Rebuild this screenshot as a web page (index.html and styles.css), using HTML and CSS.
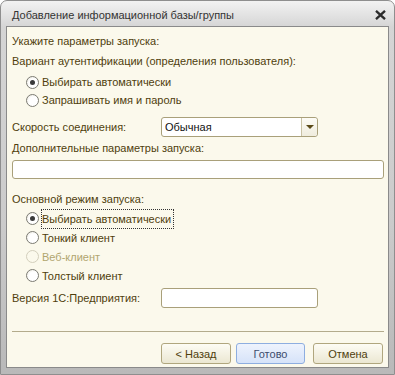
FILE: index.html
```html
<!DOCTYPE html>
<html lang="ru">
  <head>
    <meta charset="UTF-8" />
    <title>Добавление информационной базы/группы</title>
    <link rel="stylesheet" href="styles.css">
  </head>
  <body>
    <div class="window">
      <div class="titlebar">
        <span class="title">Добавление информационной базы/группы</span>
        <svg class="close" width="11" height="10" viewBox="0 0 11 10">
          <path d="M1 0.8 L10 9.2 M10 0.8 L1 9.2" stroke="#2b2b2b" stroke-width="2.3" />
        </svg>
      </div>
      <div class="content">
        <div class="line">Укажите параметры запуска:</div>
        <div class="line gap-s">Вариант аутентификации (определения пользователя):</div>
        <div class="radios auth">
          <label class="radio checked"><span class="dot"></span>Выбирать автоматически</label>
          <label class="radio"><span class="dot"></span>Запрашивать имя и пароль</label>
        </div>

        <div class="field-row speed">
          <span class="field-label">Скорость соединения:</span>
          <div class="combo">
            <span class="combo-value">Обычная</span>
            <span class="combo-btn"><span class="arrow"></span></span>
          </div>
        </div>

        <div class="line gap-s">Дополнительные параметры запуска:</div>
        <div class="input wide"></div>

        <div class="line mode-label">Основной режим запуска:</div>
        <div class="radios mode">
          <label class="radio checked"><span class="dot"></span><span class="focus">Выбирать автоматически</span></label>
          <label class="radio"><span class="dot"></span>Тонкий клиент</label>
          <label class="radio disabled"><span class="dot"></span>Веб-клиент</label>
          <label class="radio"><span class="dot"></span>Толстый клиент</label>
        </div>

        <div class="field-row version">
          <span class="field-label">Версия 1С:Предприятия:</span>
          <div class="input short"></div>
        </div>

        <div class="separator"></div>

        <div class="buttons">
          <button type="button">&lt; Назад</button>
          <button type="button" class="default">Готово</button>
          <button type="button" class="cancel">Отмена</button>
        </div>
      </div>
    </div>
  </body>
</html>
```

FILE: styles.css
```css
body {
  margin: 0;
  padding: 0;
  background-color: #ffffff;
  font-family: "Liberation Sans", Arial, sans-serif;
  font-size: 11px;
  color: #4f3e0c;
}

.window {
  width: 395px;
  height: 375px;
  box-sizing: border-box;
  padding: 0 5px 6px 5px;
  border: 1px solid #8e8e8e;
  border-radius: 7px 7px 0 0;
  background: linear-gradient(#f2f2f2, #d5d5d5 26px, #cbcbcb 60%, #b9b9b9);
  display: flex;
  flex-direction: column;
}

.titlebar {
  height: 25px;
  box-sizing: border-box;
  flex: none;
  display: flex;
  align-items: center;
  justify-content: space-between;
  padding: 3px 3px 0 6px;
}

.title {
  font-size: 11px;
  color: #333333;
}

.content {
  flex: 1;
  border: 1px solid #8a8a8a;
  background-color: #fbf9ec;
  padding: 5px 4px 0 5px;
  display: flex;
  flex-direction: column;
}

.content > * {
  flex-shrink: 0;
}

.line {
  height: 18px;
  line-height: 18px;
  white-space: nowrap;
}

.gap-s {
  margin-top: 2px;
}

.radios {
  display: flex;
  flex-direction: column;
  padding-left: 14px;
}

.auth {
  margin-top: 3px;
}

.mode {
  margin-top: 1px;
}

.radio {
  height: 18px;
  display: flex;
  align-items: center;
  white-space: nowrap;
}

.mode .radio {
  height: 19px;
}

.dot {
  width: 11px;
  height: 11px;
  border: 1px solid #7b7b73;
  border-radius: 50%;
  background: radial-gradient(circle at 60% 60%, #ffffff 50%, #e6e3d6);
  margin-right: 3px;
  position: relative;
  flex: none;
}

.radio.checked .dot::after {
  content: "";
  position: absolute;
  left: 3px;
  top: 3px;
  width: 5px;
  height: 5px;
  border-radius: 50%;
  background-color: #3a3a3a;
}

.radio.disabled {
  color: #b1a56f;
}

.radio.disabled .dot {
  border-color: #d3cfbc;
  background: #fbf9ec;
}

.focus {
  outline: 1px dotted #333333;
  padding: 0 2px 0 0;
  line-height: 18px;
}

.field-row {
  display: flex;
  align-items: center;
}

.field-label {
  width: 149px;
  flex: none;
}

.speed {
  margin-top: 8px;
}

.combo {
  width: 155px;
  height: 18px;
  border: 1px solid #a9a07a;
  border-radius: 3px;
  background-color: #ffffff;
  display: flex;
  align-items: center;
}

.combo-value {
  flex: 1;
  padding-left: 3px;
  color: #111111;
}

.combo-btn {
  width: 15px;
  height: 18px;
  border-left: 1px solid #c9c2a4;
  background: linear-gradient(#fdfcf6, #efecdd);
  border-radius: 0 3px 3px 0;
  display: flex;
  align-items: center;
  justify-content: center;
}

.arrow {
  width: 0;
  height: 0;
  border-left: 4px solid transparent;
  border-right: 4px solid transparent;
  border-top: 4px solid #5a4a18;
}

.input {
  height: 17px;
  border: 1px solid #a9a07a;
  border-radius: 3px;
  background-color: #ffffff;
}

.wide {
  margin-top: 3px;
}

.short {
  width: 155px;
  height: 18px;
}

.mode-label {
  margin-top: 11px;
}

.version {
  margin-top: 3px;
}

.separator {
  margin-top: 23px;
  border-top: 1px solid #b3ab8c;
}

.buttons {
  display: flex;
  justify-content: flex-end;
  gap: 5px;
  margin-top: 11px;
  padding-right: 1px;
}

button {
  width: 70px;
  height: 21px;
  padding: 0;
  font-family: "Liberation Sans", Arial, sans-serif;
  font-size: 11px;
  color: #4f3e0c;
  border: 1px solid #b0a67e;
  border-radius: 3px;
  background: linear-gradient(#fdfcf4, #ebe7d2);
}

button.default {
  width: 69px;
  color: #3d4d6e;
  border-color: #8eaee0;
  background: linear-gradient(#eef3fd, #d6e3f9);
}

button.cancel {
  margin-left: 3px;
}
```
